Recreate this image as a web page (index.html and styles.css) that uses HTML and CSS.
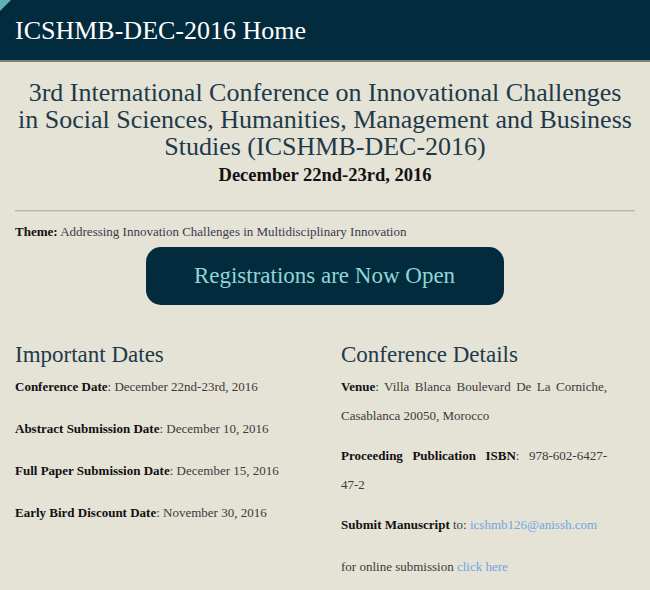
FILE: index.html
```html
<!DOCTYPE html>
<html>
<head>
<meta charset="utf-8">
<link rel="stylesheet" href="styles.css">
</head>
<body>
<header class="topbar">
  <span class="corner"></span>
  <h1 class="site-title">ICSHMB-DEC-2016 Home</h1>
</header>
<main class="content">
  <h2 class="conf-title">3rd International Conference on Innovational Challenges<br>in Social Sciences, Humanities, Management and Business<br>Studies (ICSHMB-DEC-2016)</h2>
  <p class="conf-date">December 22nd-23rd, 2016</p>
  <hr class="divider">
  <p class="theme"><b>Theme:</b> Addressing Innovation Challenges in Multidisciplinary Innovation</p>
  <div class="btn-wrap"><a class="reg-btn">Registrations are Now Open</a></div>
  <div class="cols">
    <section class="col">
      <h3 class="col-title">Important Dates</h3>
      <p class="item"><b>Conference Date</b>: December 22nd-23rd, 2016</p>
      <p class="item"><b>Abstract Submission Date</b>: December 10, 2016</p>
      <p class="item"><b>Full Paper Submission Date</b>: December 15, 2016</p>
      <p class="item"><b>Early Bird Discount Date</b>: November 30, 2016</p>
    </section>
    <section class="col col-right">
      <h3 class="col-title">Conference Details</h3>
      <p class="detail"><b>Venue</b>: Villa Blanca Boulevard De La Corniche, Casablanca 20050, Morocco</p>
      <p class="detail"><b>Proceeding Publication ISBN</b>: 978-602-6427-<wbr><span class="nowrap">47-2</span></p>
      <p class="detail"><b>Submit Manuscript</b> to: <a class="link">icshmb126@anissh.com</a></p>
      <p class="detail detail-last">for online submission <a class="link">click here</a></p>
    </section>
  </div>
</main>
</body>
</html>
```
FILE: styles.css
```css
html, body {
  margin: 0;
  padding: 0;
}
body {
  background: #e5e2d6;
  font-family: "Liberation Serif", "Times New Roman", serif;
  color: #3b3b3b;
  width: 650px;
  height: 590px;
  overflow: hidden;
}
.topbar {
  position: relative;
  background: #022b3d;
  border-bottom: 2px solid #7d8074;
  display: flex;
  align-items: center;
  padding: 0 15px;
  box-sizing: border-box;
  height: 62px;
}
.corner {
  position: absolute;
  left: 0;
  top: 0;
  width: 0;
  height: 0;
  border-top: 11px solid #5fb3b3;
  border-right: 11px solid transparent;
}
.site-title {
  margin: 0;
  color: #ffffff;
  font-weight: normal;
  font-size: 26px;
  padding-top: 2px;
}
.content {
  padding: 0 15px;
}
.conf-title {
  margin: 17px 0 0;
  text-align: center;
  font-weight: normal;
  font-size: 26px;
  line-height: 27px;
  color: #1e3a4a;
}
.conf-date {
  margin: 4px 0 0;
  text-align: center;
  font-weight: bold;
  font-size: 18.5px;
  line-height: 22px;
  color: #111;
}
.divider {
  margin: 24px 0 0;
  border: 0;
  border-top: 1px solid #b9b7ae;
  border-bottom: 1px solid #d4d2c8;
}
.theme {
  margin: 12px 0 0;
  font-size: 13px;
  line-height: 16px;
  color: #3a3a4a;
}
.theme b {
  color: #111;
}
.btn-wrap {
  display: flex;
  justify-content: center;
  margin-top: 7px;
}
.reg-btn {
  display: flex;
  align-items: center;
  justify-content: center;
  width: 358px;
  height: 58px;
  background: #022b3d;
  border-radius: 15px;
  color: #8fd6d6;
  font-size: 23px;
  margin-left: -1px;
}
.cols {
  display: grid;
  grid-template-columns: 326px 266px;
  margin-top: 37px;
}
.col-title {
  margin: 0;
  font-weight: normal;
  font-size: 23px;
  line-height: 26px;
  color: #1e3a4a;
}
.item {
  margin: 0;
  font-size: 13px;
  line-height: 42px;
}
.col-title + .item {
  margin-top: -2px;
}
.item b, .detail b {
  color: #111;
}
.detail {
  margin: 0 0 11px;
  font-size: 13px;
  line-height: 29px;
  text-align: justify;
}
.col-title + .detail {
  margin-top: 4px;
}
.detail-last {
  margin-top: 13px;
}
.nowrap {
  white-space: nowrap;
}
.link {
  color: #6fa6e0;
}
```
